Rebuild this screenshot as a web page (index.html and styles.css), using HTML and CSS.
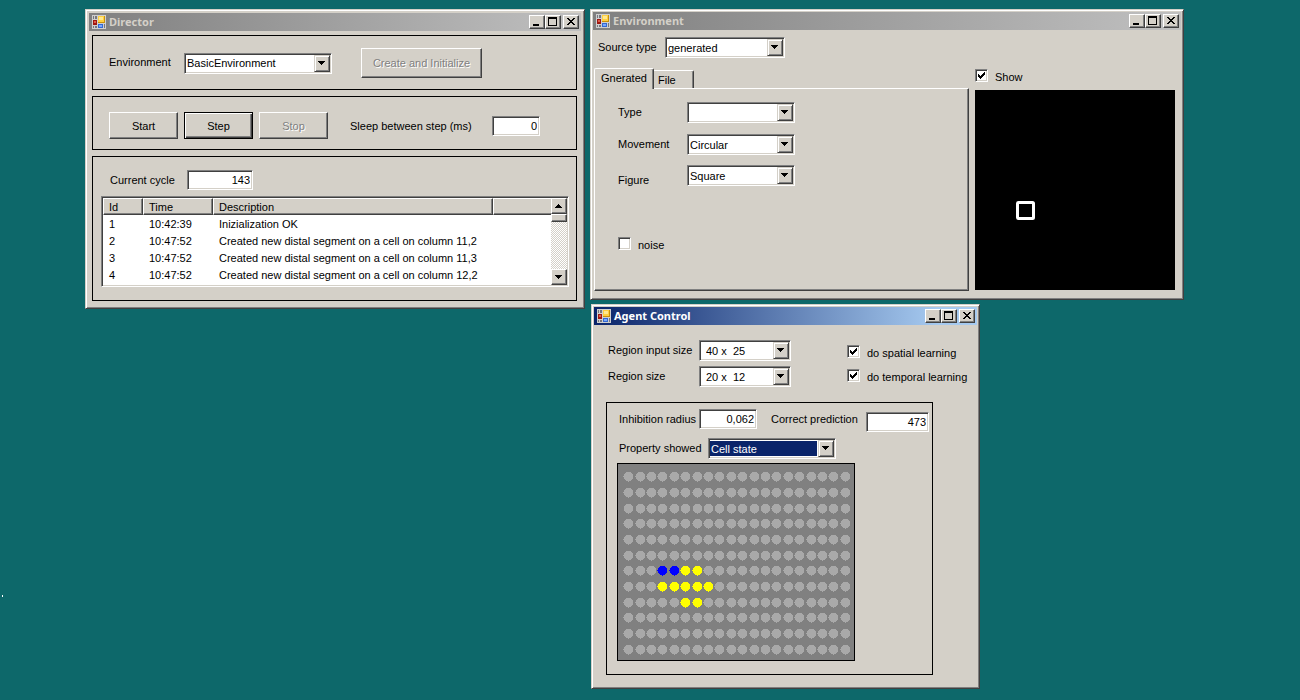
FILE: index.html
```html
<!DOCTYPE html>
<html lang="en">
<head>
<meta charset="utf-8">
<title>Director</title>
<link rel="stylesheet" href="styles.css">
</head>
<body>
<svg class="defs" aria-hidden="true">
  <symbol id="form-icon" viewBox="0 0 14 14">
    <rect width="14" height="14" fill="#cfcfcf"/>
    <path d="M1 1h1v3H1zM3 1h2v3H3zM1 11h1v2H1zM3 11h2v2H3zM12 9h1v4h-1z" fill="#77777d"/>
    <rect x="1" y="5" width="4" height="5" fill="#a01810"/>
    <rect x="2" y="6" width="2" height="2" fill="#e05a48"/>
    <rect x="6" y="1" width="7" height="7" fill="#c8900c"/>
    <rect x="6" y="1" width="6" height="6" fill="#ffd040"/>
    <rect x="7" y="2" width="4" height="3" fill="#ffe890"/>
    <rect x="6" y="9" width="5" height="4" fill="#3468d0"/>
    <rect x="7" y="10" width="3" height="2" fill="#78a8ff"/>
  </symbol>
  <symbol id="min" viewBox="0 0 16 14"><path d="M4 9h6v2H4z"/></symbol>
  <symbol id="max" viewBox="0 0 16 14"><path fill-rule="evenodd" d="M3 2h9v9H3zM4 4v6h7V4z"/></symbol>
  <symbol id="close" viewBox="0 0 16 14"><path d="M4 3h2v1h1v1h2V4h1V3h2v1h-1v1h-1v1H9v1h1v1h1v1h1v1h-2V9H9V8H7v1H6v1H4V9h1V8h1V7h1V6H6V5H5V4H4z"/></symbol>
  <symbol id="down" viewBox="0 0 16 16"><path d="M4 6h7v1h-1v1H9v1H8v1H7V9H6V8H5V7H4z"/></symbol>
  <symbol id="up" viewBox="0 0 16 16"><path d="M7 6h1v1h1v1h1v1h1v1H4V9h1V8h1V7h1z"/></symbol>
</svg>

<main class="desktop">
  <section class="window director">
    <header class="titlebar">
      <svg class="app-icon"><use href="#form-icon"/></svg>
      <h1>Director</h1>
      <button class="cap" aria-label="Minimize"><svg><use href="#min"/></svg></button>
      <button class="cap" aria-label="Maximize"><svg><use href="#max"/></svg></button>
      <button class="cap cap-close" aria-label="Close"><svg><use href="#close"/></svg></button>
    </header>
    <div class="director-body">
      <div class="panel env-panel">
        <label for="environment">Environment</label>
        <span class="combo"><select id="environment"><option>BasicEnvironment</option></select><span class="arrow"><svg><use href="#down"/></svg></span></span>
        <button class="btn btn-create" disabled>Create and Initialize</button>
      </div>
      <div class="panel run-panel">
        <button class="btn">Start</button>
        <button class="btn btn-default">Step</button>
        <button class="btn" disabled>Stop</button>
        <label for="sleep">Sleep between step (ms)</label>
        <input class="field" id="sleep" type="text" value="0">
      </div>
      <div class="panel log-panel">
        <div class="cycle">
          <label for="cycle">Current cycle</label>
          <input class="field" id="cycle" type="text" value="143">
        </div>
        <div class="list">
          <table>
            <thead><tr><th class="c-id">Id</th><th class="c-time">Time</th><th class="c-desc">Description</th><td class="c-rest"></td></tr></thead>
            <tbody>
              <tr><td>1</td><td>10:42:39</td><td>Inizialization OK</td><td></td></tr>
              <tr><td>2</td><td>10:47:52</td><td>Created new distal segment on a cell on column 11,2</td><td></td></tr>
              <tr><td>3</td><td>10:47:52</td><td>Created new distal segment on a cell on column 11,3</td><td></td></tr>
              <tr><td>4</td><td>10:47:52</td><td>Created new distal segment on a cell on column 12,2</td><td></td></tr>
            </tbody>
          </table>
          <div class="scrollbar">
            <button class="scroll-btn" aria-label="Scroll up"><svg><use href="#up"/></svg></button>
            <div class="thumb"></div>
            <button class="scroll-btn scroll-down" aria-label="Scroll down"><svg><use href="#down"/></svg></button>
          </div>
        </div>
      </div>
    </div>
  </section>

  <section class="window environment">
    <header class="titlebar">
      <svg class="app-icon"><use href="#form-icon"/></svg>
      <h1>Environment</h1>
      <button class="cap" aria-label="Minimize"><svg><use href="#min"/></svg></button>
      <button class="cap" aria-label="Maximize"><svg><use href="#max"/></svg></button>
      <button class="cap cap-close" aria-label="Close"><svg><use href="#close"/></svg></button>
    </header>
    <div class="environment-body">
      <div class="source">
        <label for="source">Source type</label>
        <span class="combo"><select id="source"><option>generated</option></select><span class="arrow"><svg><use href="#down"/></svg></span></span>
      </div>
      <div class="split">
        <div class="tabs">
          <div class="tablist" role="tablist">
            <button class="tab tab-on" role="tab" aria-selected="true">Gnerated</button>
            <button class="tab" role="tab" aria-selected="false">File</button>
          </div>
          <div class="tabpane" role="tabpanel">
            <div class="prop"><label for="type">Type</label><span class="combo"><select id="type"><option></option></select><span class="arrow"><svg><use href="#down"/></svg></span></span></div>
            <div class="prop"><label for="movement">Movement</label><span class="combo"><select id="movement"><option>Circular</option></select><span class="arrow"><svg><use href="#down"/></svg></span></span></div>
            <div class="prop prop-figure"><label for="figure">Figure</label><span class="combo"><select id="figure"><option>Square</option></select><span class="arrow"><svg><use href="#down"/></svg></span></span></div>
            <label class="check check-noise"><input type="checkbox"><span>noise</span></label>
          </div>
        </div>
        <div class="preview">
          <label class="check"><input type="checkbox" checked><span>Show</span></label>
          <svg class="scene" viewBox="0 0 200 200"><rect width="200" height="200"/><rect x="42.5" y="112.5" width="16" height="16" rx="1" fill="none" stroke="#fff" stroke-width="3"/></svg>
        </div>
      </div>
    </div>
  </section>

  <section class="window agent">
    <header class="titlebar titlebar-active">
      <svg class="app-icon"><use href="#form-icon"/></svg>
      <h1>Agent Control</h1>
      <button class="cap" aria-label="Minimize"><svg><use href="#min"/></svg></button>
      <button class="cap" aria-label="Maximize"><svg><use href="#max"/></svg></button>
      <button class="cap cap-close" aria-label="Close"><svg><use href="#close"/></svg></button>
    </header>
    <div class="agent-body">
      <div class="agent-top">
        <div class="sizes">
          <div class="size"><label for="input-size">Region input size</label><span class="combo"><select id="input-size"><option>40 x&nbsp; 25</option></select><span class="arrow"><svg><use href="#down"/></svg></span></span></div>
          <div class="size"><label for="region-size">Region size</label><span class="combo"><select id="region-size"><option>20 x&nbsp; 12</option></select><span class="arrow"><svg><use href="#down"/></svg></span></span></div>
        </div>
        <div class="learning">
          <label class="check"><input type="checkbox" checked><span>do spatial learning</span></label>
          <label class="check"><input type="checkbox" checked><span>do temporal learning</span></label>
        </div>
      </div>
      <div class="panel region">
        <div class="stats">
          <label for="radius">Inhibition radius</label>
          <input class="field" id="radius" type="text" value="0,062">
          <label class="l-pred" for="prediction">Correct prediction</label>
          <input class="field f-pred" id="prediction" type="text" value="473">
        </div>
        <div class="property">
          <label for="property">Property showed</label>
          <span class="combo combo-on"><select id="property"><option>Cell state</option></select><span class="arrow"><svg><use href="#down"/></svg></span></span>
        </div>
        <svg class="cells" id="cells" viewBox="0 0 236 196" role="img" aria-label="Cell state"></svg>
      </div>
    </div>
  </section>
  <i class="speck"></i>
</main>
<script src="cells.js"></script>
</body>
</html>
```
FILE: cells.js
```js
const state = {
  '6,3': 'blue', '6,4': 'blue', '6,5': 'yellow', '6,6': 'yellow',
  '7,3': 'yellow', '7,4': 'yellow', '7,5': 'yellow', '7,6': 'yellow', '7,7': 'yellow',
  '8,5': 'yellow', '8,6': 'yellow'
};
const grid = document.getElementById('cells');
for (let row = 0; row < 12; row++) {
  for (let col = 0; col < 20; col++) {
    const dot = document.createElementNS('http://www.w3.org/2000/svg', 'circle');
    dot.setAttribute('cx', Math.round(10.12 + col * 11.4) + 0.5);
    dot.setAttribute('cy', Math.round(12.15 + row * 15.7) + 0.5);
    dot.setAttribute('r', 5);
    dot.setAttribute('class', 'cell ' + (state[row + ',' + col] || ''));
    grid.appendChild(dot);
  }
}
```
FILE: styles.css
```css
* { box-sizing: border-box; }

body {
  margin: 0;
  background: #0d686a;
  color: #000;
  font: 11px/16px "Liberation Sans", Arial, sans-serif;
}

button, input, select { font: inherit; color: inherit; margin: 0; }
label { white-space: nowrap; }
.defs { position: absolute; width: 0; height: 0; }
.desktop { position: relative; min-height: 100vh; overflow: hidden; }
.speck { position: absolute; left: 2px; top: 595px; width: 1px; height: 2px; background: #fff; }

/* Windows */
.window {
  position: absolute;
  padding: 2px;
  background: #d4d0c8;
  border: 1px solid;
  border-color: #d4d0c8 #404040 #404040 #d4d0c8;
  box-shadow: inset 1px 1px #fff, inset -1px -1px #808080;
}
.director { left: 85px; top: 9px; width: 500px; padding: 3px; }
.environment { left: 590px; top: 9px; width: 594px; }
.agent { left: 591px; top: 304px; width: 389px; }

.titlebar {
  display: flex;
  align-items: center;
  height: 18px;
  padding: 0 2px 0 3px;
  background: linear-gradient(90deg, #808080, #c0c0c0);
  color: #d4d0c8;
}
.titlebar-active { background: linear-gradient(90deg, #0a246a, #a6caf0 90%); color: #fff; }
.titlebar h1 { flex: 1; margin: 0 0 0 3px; font: bold 11px/18px "Noto Sans", sans-serif; }
.app-icon { width: 14px; height: 14px; shape-rendering: crispEdges; }

.cap, .btn, .scroll-btn, .thumb, .arrow {
  background: #d4d0c8;
  border: 1px solid;
  border-color: #fff #404040 #404040 #fff;
  box-shadow: inset -1px -1px #808080;
  padding: 0;
}
.cap { width: 16px; height: 14px; }
.cap svg { display: block; width: 16px; height: 14px; margin: -1px; shape-rendering: crispEdges; }
.cap-close { margin-left: 2px; }

/* Controls */
.btn { width: 69px; height: 27px; }
.btn-default { border-color: #000; box-shadow: inset 1px 1px #fff, inset -1px -1px #404040, inset -2px -2px #808080; }
.btn:disabled { color: #808080; text-shadow: 1px 1px #fff; }

.field, .combo select {
  border: 1px solid;
  border-color: #808080 #fff #fff #808080;
  border-radius: 0;
  background: #fff;
  box-shadow: inset 1px 1px #404040, inset -1px -1px #d4d0c8;
  outline: 0;
}
.field { height: 20px; padding: 0 2px; text-align: right; }
.combo { position: relative; display: block; }
.combo select { appearance: none; display: block; width: 100%; height: 21px; padding: 0 18px 0 2px; line-height: 16px; }
.arrow {
  position: absolute;
  right: 2px;
  top: 2px;
  width: 16px;
  height: 17px;
  pointer-events: none;
  border-color: #d4d0c8 #404040 #404040 #d4d0c8;
  box-shadow: inset 1px 1px #fff, inset -1px -1px #808080;
}
.arrow svg { display: block; width: 16px; height: 16px; margin: -1px; shape-rendering: crispEdges; }
.combo-on select {
  color: #fff;
  background: linear-gradient(#0a246a, #0a246a) 1px 2px / calc(100% - 19px) 15px no-repeat #fff;
}

.check { display: flex; gap: 7px; height: 13px; }
.check span { line-height: 16px; }
.check input {
  appearance: none;
  width: 13px;
  height: 13px;
  border: 1px solid;
  border-color: #808080 #fff #fff #808080;
  background: #fff;
  box-shadow: inset 1px 1px #404040, inset -1px -1px #d4d0c8;
}
.check input:checked::before {
  content: "";
  display: block;
  width: 7px;
  height: 7px;
  margin: 2px;
  background: #000;
  clip-path: polygon(0 2px, 1px 2px, 1px 3px, 2px 3px, 2px 4px, 3px 4px, 3px 3px, 4px 3px, 4px 2px, 5px 2px, 5px 1px, 6px 1px, 6px 0, 7px 0, 7px 3px, 6px 3px, 6px 4px, 5px 4px, 5px 5px, 4px 5px, 4px 6px, 3px 6px, 3px 7px, 2px 7px, 2px 6px, 1px 6px, 1px 5px, 0 5px);
}

.panel { border: 1px solid #000; }
.env-panel label, .source label, .prop label, .size label, .property label { padding-bottom: 2px; }

/* Director */
.director-body { display: flex; flex-direction: column; gap: 6px; padding: 4px 4px 4px 3px; }
.env-panel { display: flex; align-items: center; padding: 12px 16px 11px; }
.env-panel label { width: 75px; }
.env-panel .combo { width: 148px; }
.btn-create { width: 121px; height: 30px; margin-left: 29px; }
.run-panel { display: flex; align-items: center; gap: 6px; padding: 15px 16px 10px; }
.run-panel label { width: 136px; margin-left: 16px; }
.run-panel .field { width: 48px; }
.log-panel { padding: 13px 7px 13px 8px; }
.cycle { display: flex; align-items: center; padding-left: 9px; margin-bottom: 6px; }
.cycle label { width: 77px; }
.cycle .field { width: 66px; }

.list {
  display: flex;
  padding: 1px;
  background: #fff;
  border: 1px solid;
  border-color: #808080 #fff #fff #808080;
  box-shadow: inset 1px 1px #404040, inset -1px -1px #d4d0c8;
}
.list table {
  flex: 1;
  align-self: flex-start;
  width: 100%;
  min-width: 0;
  margin-bottom: 2px;
  border-collapse: separate;
  border-spacing: 0;
  table-layout: fixed;
}
td, th { height: 17px; padding: 1px 0 0 6px; line-height: 16px; font-weight: normal; text-align: left; white-space: nowrap; }
thead th, thead td {
  padding: 1px 0 0 5px;
  background: #d4d0c8;
  border: 1px solid;
  border-color: #fff #404040 #404040 #fff;
  box-shadow: inset -1px -1px #808080;
  line-height: 14px;
}
thead .c-rest { border-right-width: 0; box-shadow: inset 0 -1px #808080; }
.c-id { width: 40px; }
.c-time { width: 70px; }
.c-desc { width: 280px; }
.scrollbar {
  flex: none;
  display: flex;
  flex-direction: column;
  width: 16px;
  background: repeating-conic-gradient(#fff 0 25%, #d4d0c8 0 50%) 0 0 / 2px 2px;
}
.scroll-btn { width: 16px; height: 16px; }
.scroll-btn svg { display: block; width: 16px; height: 16px; margin: -1px; shape-rendering: crispEdges; }
.thumb { height: 8px; }
.scroll-down { margin-top: auto; }

/* Environment */
.environment-body { padding: 7px 6px 6px 1px; }
.source { display: flex; align-items: center; padding-left: 4px; margin-bottom: 10px; }
.source label { width: 67px; }
.source .combo { width: 120px; }
.split { display: grid; grid-template-columns: 1fr 200px; gap: 6px; }
.tabs { display: flex; flex-direction: column; }
.tablist { display: flex; align-items: flex-end; }
.tab {
  width: 40px;
  height: 18px;
  padding: 0 0 0 4px;
  text-align: left;
  background: #d4d0c8;
  border: 0 solid;
  border-width: 1px 1px 0 0;
  border-color: #fff #404040;
  border-radius: 0 2px 0 0;
  box-shadow: inset -1px 0 #808080;
}
.tab-on {
  position: relative;
  width: 60px;
  height: 21px;
  margin-bottom: -1px;
  padding: 0 0 2px 6px;
  border-left: 1px solid #fff;
  border-radius: 2px 2px 0 0;
}
.tabpane {
  flex: 1;
  padding: 13px 23px 0;
  border: 1px solid;
  border-color: #fff #404040 #404040 #fff;
  box-shadow: inset -1px -1px #808080;
}
.prop { display: flex; align-items: center; margin-bottom: 11px; }
.prop label { width: 69px; }
.prop .combo { width: 108px; }
.prop-figure { align-items: flex-start; margin-top: -1px; }
.prop-figure label { padding-top: 7px; height: 21px; }
.check-noise { margin-top: 51px; }
.preview { padding: 1px 0; }
.preview .check { margin-bottom: 8px; }
.scene { display: block; width: 100%; }

/* Agent Control */
.agent-body { padding: 15px 44px 11px 12px; }
.agent-top { display: flex; padding-left: 2px; margin-bottom: 15px; }
.sizes { display: grid; gap: 5px; }
.size { display: flex; align-items: center; }
.size label { width: 91px; }
.size .combo { width: 92px; }
.size select { padding-left: 6px; }
.learning { display: grid; align-content: start; gap: 11px; margin: 5px -40px 0 56px; }
.region { padding: 6px 3px 13px 10px; }
.stats, .property { display: flex; align-items: flex-start; padding-left: 2px; }
.stats label { width: 80px; padding-top: 2px; }
.stats .field { width: 58px; }
.stats .l-pred { width: 95px; margin-left: 14px; }
.stats .f-pred { width: 63px; margin-top: 3px; }
.property { align-items: center; margin: 6px 0 4px; }
.property label { width: 89px; }
.property .combo { width: 128px; }
.cells { display: block; width: 238px; border: 1px solid #000; background: #808080; shape-rendering: crispEdges; }
.cell { fill: #a9a9a9; }
.cell.blue { fill: #00f; }
.cell.yellow { fill: #ff0; }
```
